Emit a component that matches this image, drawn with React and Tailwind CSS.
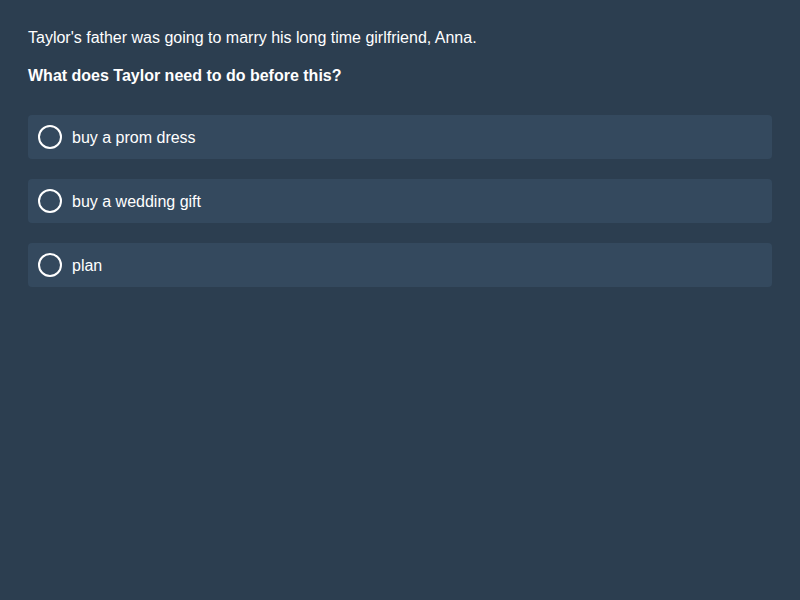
export default function App() {
  const options = ["buy a prom dress", "buy a wedding gift", "plan"];
  return (
    <div className="min-h-[600px] w-full bg-[#2c3e50] px-[28px] pt-[28px] text-white" style={{ fontFamily: '"Liberation Sans", Arial, sans-serif' }}>
      <p className="text-[16px] leading-[20px]">Taylor's father was going to marry his long time girlfriend, Anna.</p>
      <p className="mt-[18px] text-[16px] font-bold leading-[20px]">What does Taylor need to do before this?</p>
      <div className="mt-[29px] flex flex-col gap-[20px]">
        {options.map((o) => (
          <div key={o} className="flex h-[44px] items-center gap-[10px] rounded-[4px] bg-[#34495e] px-[10px]">
            <span className="box-border h-[24px] w-[24px] rounded-full border-2 border-white"></span>
            <span className="pt-[2px] text-[16px] leading-[20px]">{o}</span>
          </div>
        ))}
      </div>
    </div>
  );
}
